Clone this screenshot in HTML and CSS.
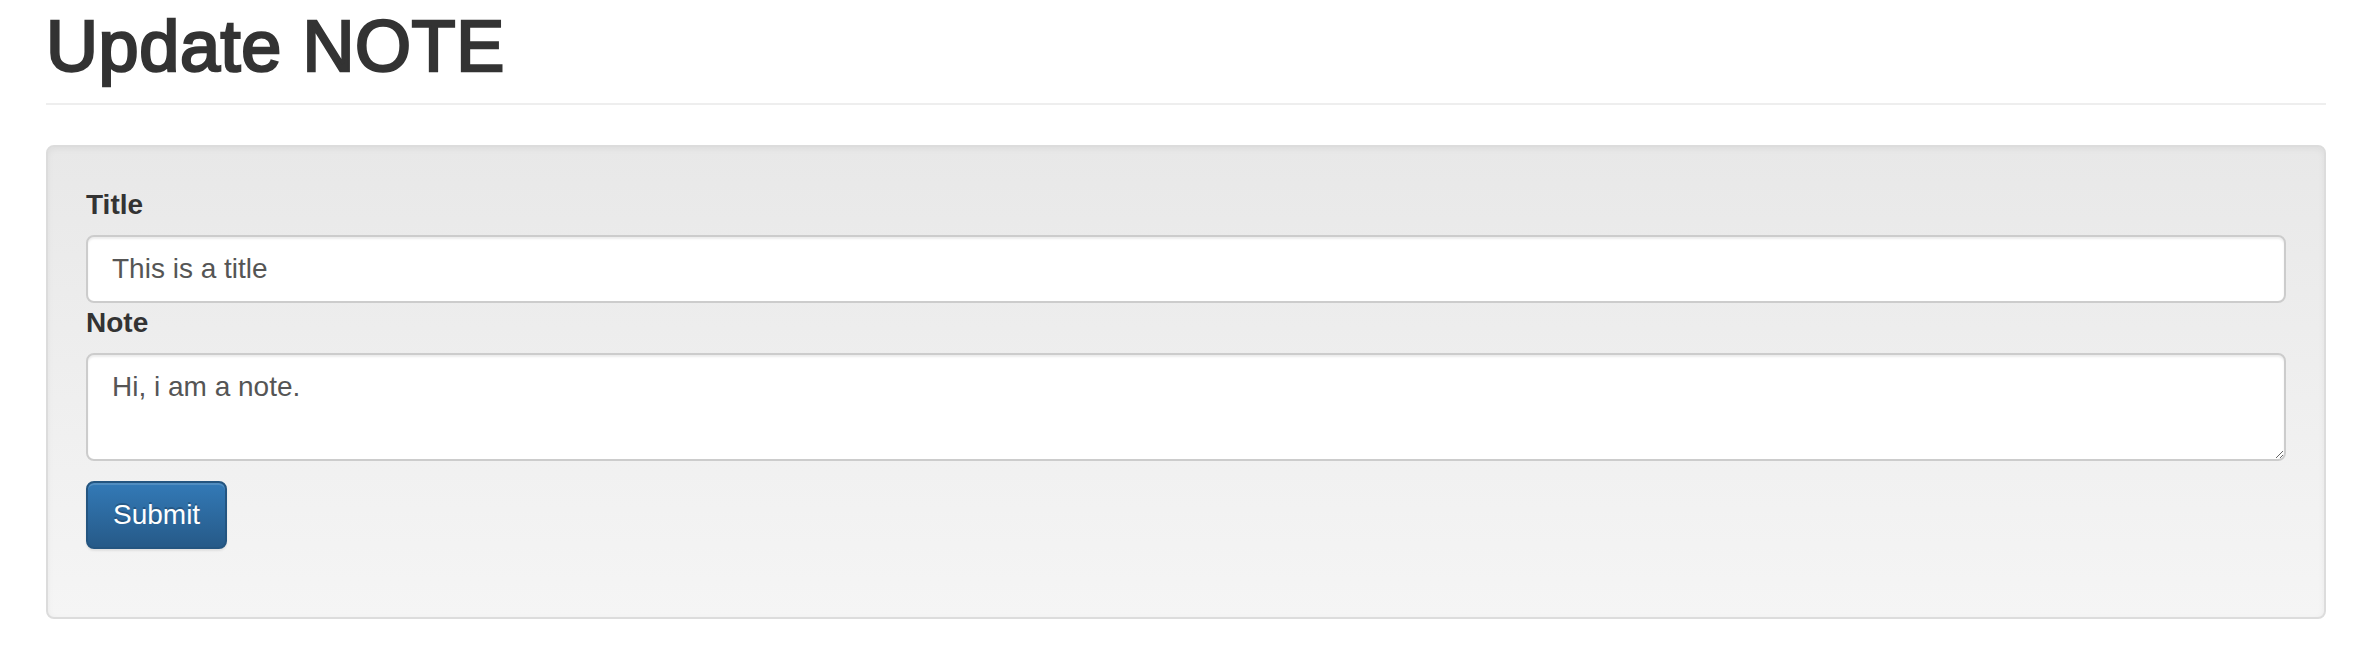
FILE: index.html
```html
<!DOCTYPE html>
<html lang="en">
<head>
<meta charset="utf-8">
<title>Update NOTE</title>
<link rel="stylesheet" href="styles.css">
</head>
<body>
<div class="container">
  <div class="page-header">
    <h1>Update NOTE</h1>
  </div>
  <form class="well">
    <label class="label" for="title">Title</label>
    <input class="form-control" id="title" type="text" value="This is a title">
    <label class="label" for="note">Note</label>
    <textarea class="form-control" id="note" rows="2">Hi, i am a note.</textarea>
    <div class="form-group">
      <button class="btn btn-primary" type="submit">Submit</button>
    </div>
  </form>
</div>
</body>
</html>
```

FILE: styles.css
```css
* {
  box-sizing: border-box;
}

html, body {
  margin: 0;
  padding: 0;
  background: #fff;
}

body {
  font-family: "Liberation Sans", Arial, Helvetica, sans-serif;
  font-size: 28px;
  line-height: 40px;
  color: #333;
}

.container {
  margin: 0 42px 0 46px;
}

.page-header {
  padding-top: 7px;
  padding-bottom: 17px;
  border-bottom: 2px solid #eee;
  margin-bottom: 40px;
}

.page-header h1 {
  margin: 0;
  font-size: 72px;
  line-height: 79px;
  font-weight: 500;
  letter-spacing: 0.6px;
  color: #333;
  -webkit-text-stroke: 2.6px #333;
}

.well {
  display: block;
  margin: 0;
  padding: 38px;
  border: 2px solid #dcdcdc;
  border-radius: 8px;
  background-color: #f5f5f5;
  background-image: linear-gradient(to bottom, #e8e8e8 0%, #f5f5f5 100%);
  box-shadow: inset 0 2px 6px rgba(0, 0, 0, 0.05), 0 2px 0 rgba(255, 255, 255, 0.1);
}

.label {
  display: inline-block;
  max-width: 100%;
  margin-bottom: 10px;
  font-weight: bold;
  font-size: 28px;
  line-height: 40px;
  color: #333;
}

.form-control {
  display: block;
  width: 100%;
  margin: 0;
  padding: 12px 24px;
  font-family: "Liberation Sans", Arial, Helvetica, sans-serif;
  font-size: 28px;
  line-height: 40px;
  color: #555;
  background-color: #fff;
  border: 2px solid #ccc;
  border-radius: 8px;
  box-shadow: inset 0 2px 2px rgba(0, 0, 0, 0.075);
  outline: none;
}

input.form-control {
  height: 68px;
}

textarea.form-control {
  height: 108px;
  resize: vertical;
}

.form-group {
  margin-top: 20px;
  margin-bottom: 30px;
}

.btn {
  display: inline-block;
  margin: 0;
  padding: 12px 25px;
  font-family: "Liberation Sans", Arial, Helvetica, sans-serif;
  font-size: 28px;
  line-height: 40px;
  font-weight: normal;
  text-align: center;
  white-space: nowrap;
  cursor: pointer;
  border: 2px solid transparent;
  border-radius: 8px;
}

.btn-primary {
  color: #fff;
  background-color: #265a88;
  background-image: linear-gradient(to bottom, #337ab7 0%, #265a88 100%);
  border-color: #245580;
  text-shadow: 0 -2px 0 rgba(0, 0, 0, 0.2);
  box-shadow: inset 0 2px 0 rgba(255, 255, 255, 0.15), 0 2px 2px rgba(0, 0, 0, 0.075);
}
```
